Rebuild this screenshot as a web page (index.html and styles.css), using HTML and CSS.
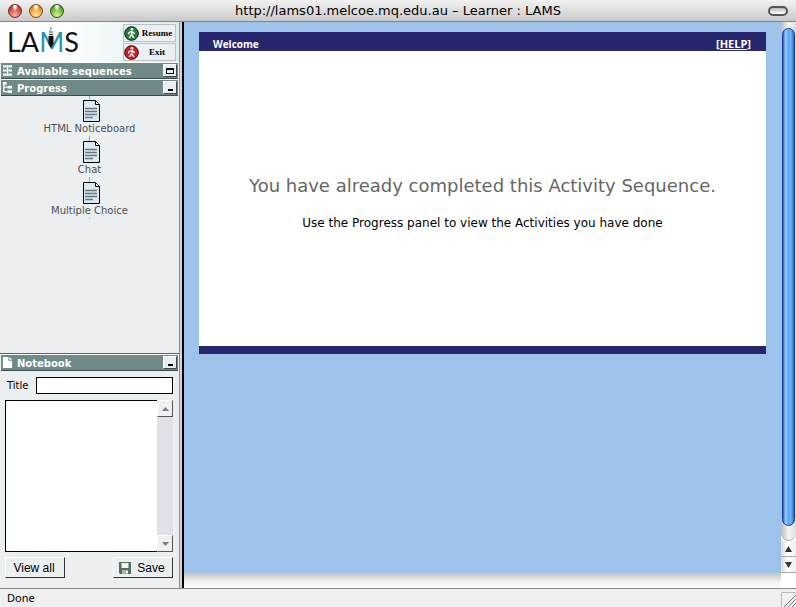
FILE: index.html
```html
<!DOCTYPE html>
<html lang="en">
<head>
<meta charset="utf-8">
<title>Learner : LAMS</title>
<link rel="stylesheet" href="styles.css">
</head>
<body>
<svg class="defs" aria-hidden="true">
  <symbol id="doc" viewBox="0 0 17 22">
    <path d="M.5 .5H12.5L16.5 4.5V21.5H.5Z" fill="#d8eaf4" stroke="#000"/>
    <path d="M12.5 1V4.5H16.5" fill="#fff" stroke="#000"/>
    <path d="M2 8.5H14M2 11.5H14M2 14.5H14M2 17.5H10" stroke="#6b7478" stroke-width="1.4"/>
  </symbol>
  <symbol id="walker" viewBox="0 0 16 16">
    <circle cx="8" cy="8" r="7.3" fill="currentColor" stroke="#111" stroke-width="1"/>
    <circle cx="8.5" cy="3.4" r="1.4" fill="#fff"/>
    <path d="M8.2 5.2V9L5.6 13M8.2 9L10.6 13M8 5.6L5.2 7.2V9M8.6 5.8L11.4 8.4" fill="none" stroke="#fff" stroke-width="1.5"/>
  </symbol>
</svg>
<header class="titlebar">
  <div class="lights">
    <button class="light red" aria-label="Close"></button>
    <button class="light amber" aria-label="Minimize"></button>
    <button class="light green" aria-label="Zoom"></button>
  </div>
  <h1 class="window-title">http://lams01.melcoe.mq.edu.au – Learner : LAMS</h1>
  <button class="pill" aria-label="Toggle toolbar"></button>
</header>
<div class="workspace">
  <aside class="sidebar">
    <div class="brand">
      <div class="logo">LA<span class="logo-m">M<svg class="pen" viewBox="0 0 8 22" aria-hidden="true"><path d="M1.5 9H6.5V17L4 21L1.5 17Z" fill="#111"/><path d="M2 7.5H6" stroke="#444" stroke-width="1.5"/><path d="M3 6V3M5 6V4" stroke="#226677"/><circle cx="4" cy="1.5" r="1" fill="#2a9ab5"/></svg></span>S</div>
      <div class="session">
        <button class="session-btn"><svg class="walk go"><use href="#walker"/></svg><span>Resume</span></button>
        <button class="session-btn"><svg class="walk stop"><use href="#walker"/></svg><span>Exit</span></button>
      </div>
    </div>
    <section class="panel">
      <div class="panel-head">
        <svg class="head-icon" viewBox="0 0 12 14" aria-hidden="true"><path d="M1 2.5H5M7 2.5H11M1 7H5M7 7H11M1 11.5H5M7 11.5H11" stroke="#fff" stroke-width="2.4"/><path d="M6 1V13" stroke="#fff" stroke-width="1.6"/></svg>
        <h2>Available sequences</h2>
        <button class="toggle" aria-label="Open Available sequences"><span class="box"></span></button>
      </div>
    </section>
    <section class="panel progress">
      <div class="panel-head">
        <svg class="head-icon" viewBox="0 0 12 14" aria-hidden="true"><path d="M1 1H5V4H1ZM6 5H11V8H6ZM6 10H11V13H6Z" fill="#fff"/><path d="M2 4V11.5H6M2 6.5H6" fill="none" stroke="#fff" stroke-width="1.4"/></svg>
        <h2>Progress</h2>
        <button class="toggle" aria-label="Collapse Progress"><span class="dash"></span></button>
      </div>
      <ol class="steps">
        <li><svg class="doc"><use href="#doc"/></svg><span>HTML Noticeboard</span></li>
        <li><svg class="doc"><use href="#doc"/></svg><span>Chat</span></li>
        <li><svg class="doc"><use href="#doc"/></svg><span>Multiple Choice</span></li>
      </ol>
    </section>
    <section class="panel notebook">
      <div class="panel-head">
        <svg class="head-icon" viewBox="0 0 12 14" aria-hidden="true"><path d="M1 1H7V5H11V13H1Z" fill="#fff"/><path d="M8 1L11 4H8Z" fill="#fff"/></svg>
        <h2>Notebook</h2>
        <button class="toggle" aria-label="Collapse Notebook"><span class="dash"></span></button>
      </div>
      <form class="note-form">
        <div class="title-row">
          <label for="note-title">Title</label>
          <input id="note-title" type="text">
        </div>
        <div class="editor">
          <textarea aria-label="Note text"></textarea>
          <div class="note-scroll">
            <button type="button" class="step-btn" aria-label="Scroll up"><svg viewBox="0 0 7 4"><path d="M0 4L3.5 0L7 4Z"/></svg></button>
            <button type="button" class="step-btn" aria-label="Scroll down"><svg viewBox="0 0 7 4"><path d="M0 0L3.5 4L7 0Z"/></svg></button>
          </div>
        </div>
        <div class="actions">
          <button type="button" class="action">View all</button>
          <button type="button" class="action"><svg class="disk" viewBox="0 0 12 12" aria-hidden="true"><path d="M0 0H12V12H1L0 11Z" fill="#55705c"/><path d="M2.5 1H9.5V6H2.5Z" fill="#f4f8f4"/><path d="M3 8H9V12H3Z" fill="#a9b6ab"/><path d="M7 9H9V11H7Z" fill="#fff"/></svg>Save</button>
        </div>
      </form>
    </section>
  </aside>
  <div class="divider"></div>
  <div class="view">
    <main class="stage">
      <article class="card">
        <header class="card-head"><h2>Welcome</h2><a href="#help">[HELP]</a></header>
        <div class="card-body">
          <p class="lead">You have already completed this Activity Sequence.</p>
          <p class="hint">Use the Progress panel to view the Activities you have done</p>
        </div>
      </article>
    </main>
    <div class="scrollbar">
      <div class="track"><div class="thumb"></div></div>
      <button class="arrow" aria-label="Scroll page up"><svg viewBox="0 0 7 6"><path d="M0 6L3.5 0L7 6Z"/></svg></button>
      <button class="arrow" aria-label="Scroll page down"><svg viewBox="0 0 7 6"><path d="M0 0L3.5 6L7 0Z"/></svg></button>
    </div>
    <div class="hbar"></div>
    <div class="corner"></div>
  </div>
</div>
<footer class="status"><span>Done</span>
  <svg class="grip" viewBox="0 0 15 15" aria-hidden="true"><path d="M.5 15V.5H15" fill="none" stroke="#bbb"/><path d="M3 15L15 3M7 15L15 7M11 15L15 11" stroke="#777"/></svg>
</footer>
</body>
</html>
```
FILE: styles.css
```css
* { box-sizing: border-box; }
body {
  margin: 0;
  min-height: 100vh;
  display: flex;
  flex-direction: column;
  font-family: "DejaVu Sans", Verdana, sans-serif;
  font-size: 10px;
  color: #000;
  background: #edf1f2;
}
h1, h2, p, ol { margin: 0; padding: 0; }
button { padding: 0; margin: 0; font: inherit; color: inherit; }
.defs { display: none; }

.titlebar {
  flex: none;
  height: 22px;
  display: grid;
  grid-template-columns: 80px 1fr 80px;
  align-items: center;
  padding: 0 8px;
  border-bottom: 1px solid #858585;
  border-radius: 6px 6px 0 0;
  background: linear-gradient(#f2f2f2, #dedede 50%, #c9c9c9);
}
.lights { display: flex; gap: 7px; }
.light {
  width: 14px;
  height: 14px;
  border: 1px solid #444;
  border-radius: 50%;
}
.red { background: radial-gradient(ellipse at 50% 10%, #fff 10%, transparent 35%), radial-gradient(circle at 50% 85%, #ffb0a5, #d3493f 60%, #8c2a26); border-color: #682c2a; }
.amber { background: radial-gradient(ellipse at 50% 10%, #fff 10%, transparent 35%), radial-gradient(circle at 50% 85%, #ffe98c, #ef9a31 60%, #a55f14); border-color: #76481d; }
.green { background: radial-gradient(ellipse at 50% 10%, #fff 10%, transparent 35%), radial-gradient(circle at 50% 85%, #d5f993, #62b335 60%, #316d1b); border-color: #2e5220; }
.window-title {
  text-align: center;
  font: 13px/20px "DejaVu Sans", sans-serif;
}
.pill {
  justify-self: end;
  width: 20px;
  height: 10px;
  border: 2px solid #555;
  border-radius: 5px;
  background: linear-gradient(#bbb, #fff);
}

.workspace { flex: 1; display: flex; }
.sidebar {
  flex: none;
  width: 179px;
  display: flex;
  flex-direction: column;
  background: #ebeff0;
}
.brand {
  height: 40px;
  display: flex;
  justify-content: space-between;
  align-items: flex-start;
  padding: 2px 3px 0 7px;
  background: linear-gradient(90deg, #fff 35%, #dcedf0);
}
.logo {
  font: 27px/36px Lato, sans-serif;
  color: #111;
}
.logo-m { position: relative; color: #2a93ad; }
.pen { position: absolute; left: 8px; top: 2px; width: 8px; height: 22px; }
.session { display: flex; flex-direction: column; gap: 1px; }
.session-btn {
  width: 53px;
  height: 18px;
  display: flex;
  align-items: center;
  border: 1px solid #b9c3c6;
  background: #ecf0f2;
  font: bold 9px/16px "Liberation Serif", serif;
}
.session-btn span { flex: 1; text-align: center; }
.walk { flex: none; width: 15px; height: 15px; }
.go { color: #247a3c; }
.stop { color: #e3131b; }

.panel-head {
  height: 17px;
  display: flex;
  align-items: center;
  gap: 4px;
  padding: 0 1px;
  margin-left: 1px;
  margin-right: 1px;
  border-top: 1px solid #fff;
  border-bottom: 1px solid #374c4e;
  background: #708a8a;
}
.panel-head h2 { flex: 1; padding-top: 2px; font-size: 10px; line-height: 14px; color: #fff; }
.head-icon { flex: none; width: 11px; height: 13px; }
.toggle {
  width: 14px;
  height: 13px;
  display: grid;
  place-items: center;
  border: 1px solid #fff;
  border-right-color: #444;
  border-bottom-color: #444;
  background: #e9edee;
}
.box { width: 8px; height: 6px; border: 1px solid #111; border-top-width: 2px; }
.dash { width: 5px; height: 2px; margin-top: 4px; background: #000; }

.progress { flex: 1; }
.steps {
  list-style: none;
  width: max-content;
  margin: 0 auto;
  padding-top: 4px;
  background: linear-gradient(#a3aaac, #a3aaac) 50% 0 / 1px 100% no-repeat;
}
.steps li { height: 41px; display: flex; flex-direction: column; align-items: center; }
.steps li:last-child { height: 37px; }
.steps span { line-height: 14px; color: #4c4f56; background: #ebeff0; }
.doc { flex: none; width: 17px; height: 22px; margin-left: 4px; }

.notebook { border-top: 1px solid #566; }
.note-form { padding: 6px 6px 10px 5px; }
.title-row { display: flex; align-items: center; gap: 8px; padding-left: 2px; }
.title-row input {
  flex: 1;
  min-width: 0;
  height: 17px;
  border: 1px solid #000;
  padding: 0 2px;
  background: #fff;
}
.editor { display: flex; height: 152px; margin: 6px 0 5px; }
.editor textarea {
  flex: 1;
  min-width: 0;
  border: 1px solid #000;
  border-right: 0;
  padding: 2px;
  resize: none;
  background: #fff;
}
.note-scroll {
  width: 16px;
  display: flex;
  flex-direction: column;
  justify-content: space-between;
  background: #e0e2e9;
}
.step-btn {
  height: 17px;
  display: grid;
  place-items: center;
  border: 1px solid #fff;
  border-right-color: #555;
  border-bottom: 1px solid #555;
  background: #edf1f2;
}
.step-btn svg { width: 7px; height: 4px; fill: #7b7f82; }
.actions { display: flex; justify-content: space-between; }
.action {
  height: 21px;
  width: 60px;
  display: flex;
  align-items: center;
  justify-content: center;
  gap: 6px;
  padding-right: 2px;
  border: 1px solid #fff;
  border-right-color: #333;
  border-bottom-color: #333;
  background: #ebeff0;
  font: 12px/18px "Liberation Sans", sans-serif;
}
.disk { width: 12px; height: 12px; }

.divider {
  flex: none;
  width: 5px;
  border-left: 1px solid #8d8d8d;
  border-right: 2px solid #000;
  background: #d5d5d5;
}
.view {
  flex: 1;
  display: grid;
  grid-template-columns: 1fr 15px;
  grid-template-rows: 1fr 15px;
}
.stage { padding: 10px 15px; background: #9dc3ea; }
.card { background: #fff; border-bottom: 8px solid #27276f; }
.card-head {
  height: 19px;
  display: flex;
  justify-content: space-between;
  padding: 3px 15px 0 14px;
  background: #27276f;
  font: bold 11px/18px "Open Sans", sans-serif;
  color: #fff;
}
.card-head h2 { font: bold 10px/18px "Open Sans", sans-serif; }
.card-head a { color: #fff; }
.card-body {
  padding: 123px 0 112px;
  text-align: center;
}
.lead { padding-bottom: 14px; font-size: 18px; line-height: 24px; color: #666; }
.hint { font-size: 12px; line-height: 22px; }

.scrollbar { display: flex; flex-direction: column; background: #fff; }
.track {
  flex: 1;
  padding: 6px 1px 14px;
  border-radius: 0 0 8px 8px;
  background: linear-gradient(90deg, #bbb, #f5f5f5 50%, #ddd);
  border-bottom: 1px solid #aaa;
}
.thumb {
  height: 100%;
  border: 1px solid #123a9a;
  border-radius: 7px;
  background: linear-gradient(90deg, #1c5fd0, #9fd0ff 25%, #5aa5f3 50%, #6db7fb 70%, #2567d2);
}
.arrow {
  height: 16px;
  display: grid;
  place-items: center;
  border: 0;
  border-bottom: 1px solid #aaa;
  background: linear-gradient(90deg, #ddd, #fff 50%, #eee);
}
.arrow svg { width: 7px; height: 6px; fill: #333; }
.hbar { background: linear-gradient(#c4c4c4, #f3f3f3 60%, #fff); }
.corner { background: #fff; }

.status {
  flex: none;
  height: 19px;
  display: flex;
  justify-content: space-between;
  align-items: flex-end;
  padding-left: 7px;
  border-top: 1px solid #8a8a8a;
  background: #efefef;
  font: 11px/18px "Noto Sans", sans-serif;
}
.grip { width: 15px; height: 15px; }
```
